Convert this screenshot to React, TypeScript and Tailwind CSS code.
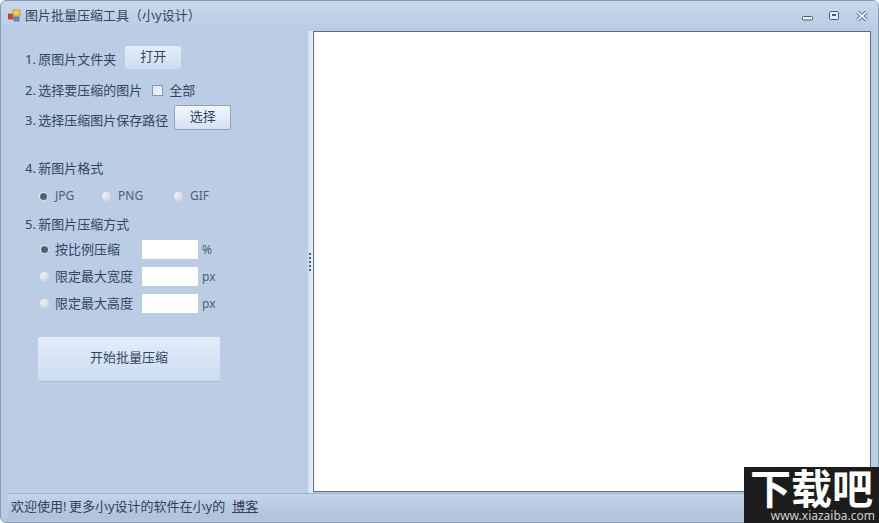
const font = { fontFamily: '"Noto Sans", "Noto Sans CJK SC", sans-serif' };

function Radio({ on }: { on?: boolean }) {
  return (
    <span className="flex h-[11px] w-[11px] shrink-0 items-center justify-center rounded-full border border-[#c3cbd3] bg-gradient-to-br from-[#f4f6f8] to-[#ccd3da]">
      {on && <span className="h-[7px] w-[7px] rounded-full bg-[#4f6079]" />}
    </span>
  );
}

function Field({ unit, label, on, h }: { unit: string; label: string; on?: boolean; h: string }) {
  return (
    <div className={`flex items-center pl-[38px] ${h}`}>
      <Radio on={on} />
      <span className="ml-[5px] w-[87px] whitespace-nowrap">{label}</span>
      <span className="h-[19px] w-[56px] bg-white" />
      <span className="ml-[4px] text-[12px] text-[#4a5d79]">{unit}</span>
    </div>
  );
}

function Btn({ children, cls }: { children: string; cls: string }) {
  return (
    <button className={`flex items-center justify-center rounded-[2px] bg-gradient-to-b from-[#e3edf9] to-[#ccdcef] ${cls}`}>
      {children}
    </button>
  );
}

export default function App() {
  return (
    <div style={font} className="relative flex h-[523px] w-[879px] flex-col rounded-[6px] border border-[#8a9bb0] bg-[#bbcde4] text-[13px] leading-none text-[#33455f]">
      <div className="flex h-[30px] shrink-0 items-center rounded-t-[5px] bg-gradient-to-b from-[#c9d9ec] to-[#b9cbe3] pb-[1px] pl-[7px] pr-[10px]">
        <svg width="13" height="13" viewBox="0 0 13 13" className="shrink-0">
          <rect x="0" y="5" width="5" height="5" fill="#d8422a" stroke="#8a3a20" strokeWidth="0.6" />
          <rect x="5" y="1" width="7" height="6" fill="#f3c84a" stroke="#a58428" strokeWidth="0.6" />
          <rect x="6" y="8" width="5" height="4" fill="#5f8fd6" stroke="#3e609a" strokeWidth="0.6" />
        </svg>
        <span className="ml-[4px] whitespace-nowrap">图片批量压缩工具（小y设计）</span>
        <div className="ml-auto flex items-center gap-[16px]">
          <svg width="11" height="11" viewBox="0 0 11 11"><rect x="0.5" y="6.5" width="10" height="3.5" rx="1" fill="#f2f6fb" stroke="#4a5a72" /></svg>
          <svg width="11" height="10" viewBox="0 0 11 10"><rect x="0.5" y="0.5" width="9" height="8" rx="1" fill="#e4edf7" stroke="#4a5a72" /><rect x="3" y="3" width="4" height="2" fill="#4a5a72" /></svg>
          <svg width="12" height="10" viewBox="0 0 12 10"><path d="M1.5 1 L10.5 9 M10.5 1 L1.5 9" stroke="#4a5a72" strokeWidth="3.6" /><path d="M1.5 1 L10.5 9 M10.5 1 L1.5 9" stroke="#f2f6fb" strokeWidth="1.8" /></svg>
        </div>
      </div>

      <div className="flex min-h-0 flex-1">
        <div className="w-[307px] shrink-0 pt-[14px] [word-spacing:-1px]">
          <div className="flex h-[29px] items-center pl-[24px]">
            <span className="whitespace-nowrap">1. 原图片文件夹</span>
            <Btn cls="ml-[9px] h-[23px] w-[56px] -mt-[5px] pb-[2px]">打开</Btn>
          </div>
          <div className="flex h-[30px] items-center pl-[24px] pt-[3px]">
            <span className="whitespace-nowrap">2. 选择要压缩的图片</span>
            <span className="ml-[10px] h-[11px] w-[11px] border border-[#8b97a8] bg-gradient-to-br from-[#dfe3e8] to-[#f4f6f8]" />
            <span className="ml-[6px]">全部</span>
          </div>
          <div className="flex h-[32px] items-center pl-[24px]">
            <span className="mt-[1px] whitespace-nowrap">3. 选择压缩图片保存路径</span>
            <Btn cls="ml-[6px] h-[25px] w-[57px] -mt-[5px] pb-[2px] border border-[#8fa3bd] from-[#f2f6fb] to-[#d5e2f2]">选择</Btn>
          </div>

          <div className="mt-[20px] flex h-[24px] items-center pl-[24px]">4. 新图片格式</div>
          <div className="mt-[1px] flex h-[30px] items-center pl-[37px] text-[12px] text-[#4a5d79]">
            <Radio on />
            <span className="ml-[6px] w-[46px]">JPG</span>
            <Radio />
            <span className="ml-[6px] w-[55px]">PNG</span>
            <Radio />
            <span className="ml-[6px]">GIF</span>
          </div>
          <div className="-mt-[1px] flex h-[28px] items-center pl-[24px]">5. 新图片压缩方式</div>
          <Field label="按比例压缩" unit="%" on h="h-[27px] -mt-[2px]" />
          <Field label="限定最大宽度" unit="px" h="h-[27px]" />
          <Field label="限定最大高度" unit="px" h="h-[27px]" />
          <Btn cls="ml-[37px] mt-[20px] h-[45px] w-[182px] border-b border-[#a9bbd3] pb-[3px]">开始批量压缩</Btn>
        </div>

        <div className="flex w-[5px] shrink-0 flex-col items-center justify-center gap-[2px] bg-gradient-to-r from-[#cfdff2] to-[#e6effa] pb-[1px] pr-[1px]">
          {[0, 1, 2, 3, 4].map((i) => (
            <span key={i} className="h-[2px] w-[2px] bg-[#4f5f75]" />
          ))}
        </div>
        <div className="mb-[1px] mr-[7px] flex-1 border border-[#5d6d84] bg-white" />
      </div>

      <div className="mx-[7px] flex h-[25px] shrink-0 items-center border-t border-[#9fb2cb] bg-gradient-to-b from-[#c4d4e8] to-[#afc2da] pl-[3px] text-[#2f415b]">
        <span className="whitespace-nowrap [word-spacing:-1px]">欢迎使用! 更多小y设计的软件在小y的</span>
        <span className="ml-[7px] underline">博客</span>
      </div>
      <div className="h-[4px] shrink-0 rounded-b-[5px] bg-[#b3c5dc]" />

      <div className="absolute -bottom-[1px] -right-[1px] flex h-[56px] w-[135px] flex-col items-center bg-[#1c1c1c] text-white">
        <span className="whitespace-nowrap text-[41px] font-bold leading-[43px]">下载吧</span>
        <span className="self-end whitespace-nowrap pr-[4px] text-[12px] leading-[12px] text-[#d0d0d0]">www.xiazaiba.com</span>
      </div>
    </div>
  );
}
